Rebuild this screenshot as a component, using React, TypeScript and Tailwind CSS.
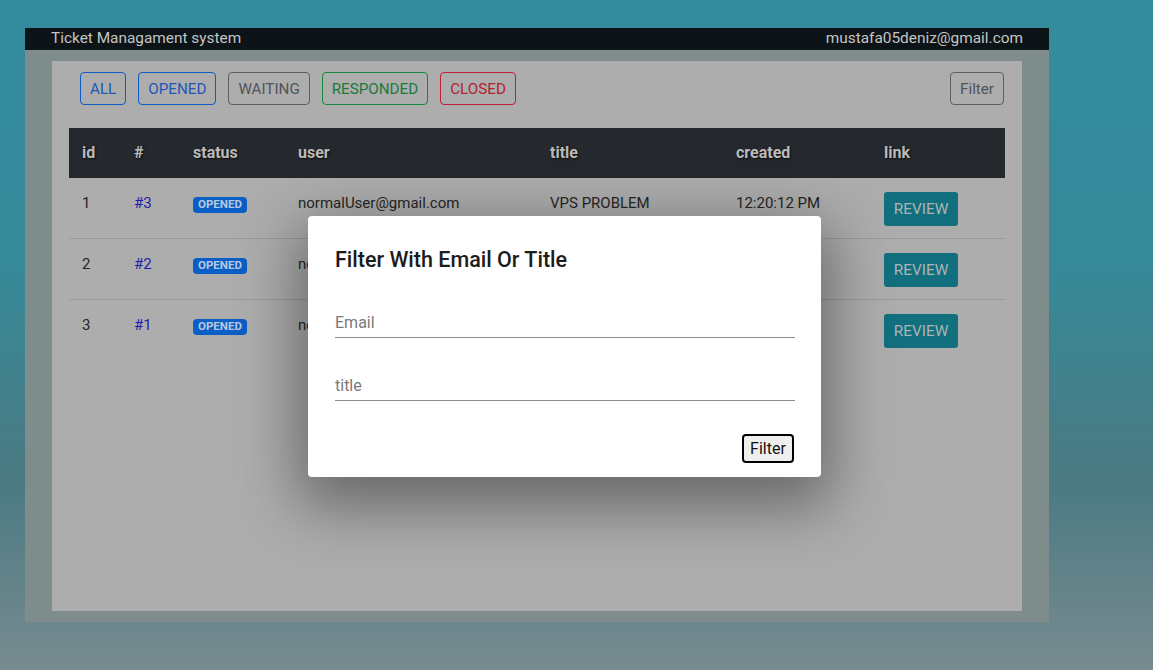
const tickets = [
  { id: 1, ref: "#3", user: "normalUser@gmail.com", title: "VPS PROBLEM", created: "12:20:12 PM" },
  { id: 2, ref: "#2", user: "normalUser@gmail.com", title: "VPS PROBLEM", created: "12:18:40 PM" },
  { id: 3, ref: "#1", user: "normalUser@gmail.com", title: "VPS PROBLEM", created: "12:15:03 PM" },
];

const cols = "grid grid-cols-[52px_59px_105px_252px_186px_148px_134px]";

function StatusButton({ label, tone }: { label: string; tone: string }) {
  return (
    <button className={`h-[33px] px-[9px] pt-[2px] rounded-[4px] border text-[15.2px] uppercase leading-none ${tone}`}>
      {label}
    </button>
  );
}

export default function App() {
  return (
    <div
      className="relative min-h-screen w-full pt-[28px] pl-[25px] bg-[linear-gradient(180deg,#338c9c_0%,#358a9a_38%,#4b7a82_72%,#788b90_100%)]"
      style={{ fontFamily: "Roboto, 'Noto Sans', sans-serif" }}
    >
      <div className="w-[1024px] h-[594px] bg-[#7f8c8c] flex flex-col">
        <div className="h-[22px] bg-[#0d1417] flex items-center justify-between px-[26px] text-[15.4px] text-[#c4c4c4]">
          <span>Ticket Managament system</span>
          <span>mustafa05deniz@gmail.com</span>
        </div>

        <div className="flex-1 px-[27px] pt-[11px] pb-[11px]">
          <div className="h-full bg-[#adadad] px-[17px] pt-[11px]">
            <div className="flex items-center justify-between pl-[11px] pr-[1px]">
              <div className="flex gap-[12px]">
                <StatusButton label="All" tone="border-[#0d5bc6] text-[#1f57b8]" />
                <StatusButton label="Opened" tone="border-[#0d5bc6] text-[#1f57b8]" />
                <StatusButton label="Waiting" tone="border-[#5c5f63] text-[#505458]" />
                <StatusButton label="Responded" tone="border-[#16883e] text-[#1b7a3a]" />
                <StatusButton label="Closed" tone="border-[#bf1f30] text-[#b3222f]" />
              </div>
              <button className="h-[33px] px-[9px] pt-[2px] rounded-[4px] border border-[#5c5f63] text-[15.2px] text-[#505458] leading-none">
                Filter
              </button>
            </div>

            <div className="mt-[23px] w-[936px]">
              <div
                className={`${cols} h-[50px] items-center bg-[#25282d] text-[16px] font-bold text-[#bababa] [text-shadow:1px_1px_2px_rgba(0,0,0,0.7)]`}
              >
                {["id", "#", "status", "user", "title", "created", "link"].map((h) => (
                  <div key={h} className="pl-[13px]">
                    {h}
                  </div>
                ))}
              </div>
              {tickets.map((t, i) => (
                <div
                  key={t.id}
                  className={`${cols} h-[61px] text-[15px] text-[#262626] leading-[22px] ${
                    i < tickets.length - 1 ? "border-b border-[#999999]" : ""
                  }`}
                >
                  <div className="pl-[13px] pt-[14px]">{t.id}</div>
                  <div className="pl-[13px] pt-[14px] text-[#1d1daa]">{t.ref}</div>
                  <div className="pl-[13px] pt-[14px]">
                    <span className="inline-flex items-center h-[16px] px-[5px] rounded-[4px] bg-[#0a5fc6] text-[11.5px] font-bold text-[#b8c8de] leading-none">
                      OPENED
                    </span>
                  </div>
                  <div className="pl-[13px] pt-[14px]">{t.user}</div>
                  <div className="pl-[13px] pt-[14px]">{t.title}</div>
                  <div className="pl-[13px] pt-[14px]">{t.created}</div>
                  <div className="pl-[13px] pt-[14px]">
                    <button className="h-[34px] w-[74px] pt-[1px] rounded-[3px] bg-[#126f7d] text-[15.4px] text-[#a9b5b7] leading-none">
                      REVIEW
                    </button>
                  </div>
                </div>
              ))}
            </div>
          </div>
        </div>
      </div>

      <div className="absolute left-[308px] top-[216px] w-[513px] h-[261px] bg-white rounded-[4px] shadow-[0_20px_60px_10px_rgba(0,0,0,0.4)] px-[27px] pt-[30px]">
        <h2 className="text-[21.5px] font-medium text-[#1c1c1c] leading-[28px]">Filter With Email Or Title</h2>
        <div className="mt-[37px] w-[460px] border-b border-[#8c8c8c] h-[27px]">
          <input
            placeholder="Email"
            className="w-full bg-transparent outline-none text-[16px] text-[#333] placeholder:text-[#7a7a7a] leading-[22px]"
          />
        </div>
        <div className="mt-[36px] w-[460px] border-b border-[#8c8c8c] h-[27px]">
          <input
            placeholder="title"
            className="w-full bg-transparent outline-none text-[16px] text-[#333] placeholder:text-[#7a7a7a] leading-[22px]"
          />
        </div>
        <div className="mt-[33px] w-[460px] flex justify-end pr-[1px]">
          <button className="h-[29px] w-[52px] border-2 border-black rounded-[4px] bg-[#efefef] text-[16px] text-[#111] leading-none">
            Filter
          </button>
        </div>
      </div>
    </div>
  );
}
